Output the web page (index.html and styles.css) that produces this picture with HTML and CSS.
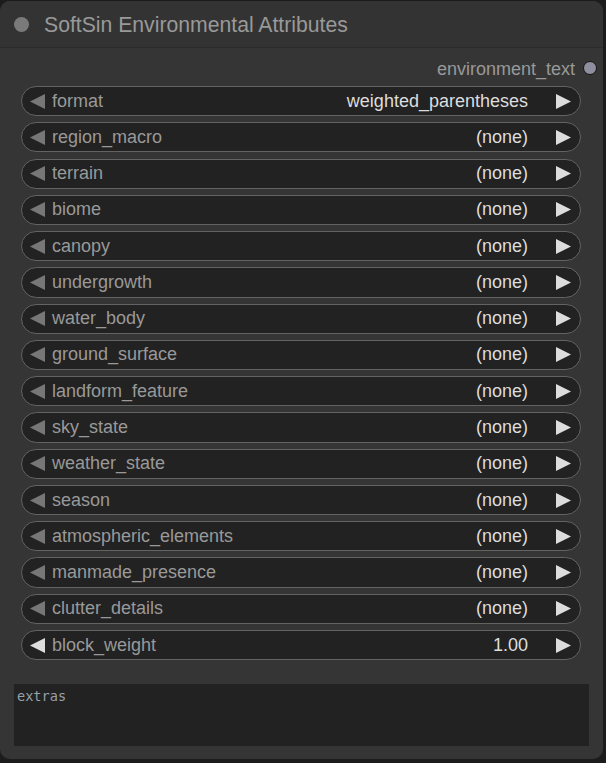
FILE: index.html
```html
<!DOCTYPE html>
<html>
<head>
<meta charset="utf-8">
<link rel="stylesheet" href="styles.css">
</head>
<body>
<div class="node">
  <div class="title">
    <span class="title-dot"></span>
    <span class="title-text">SoftSin Environmental Attributes</span>
  </div>
  <div class="body">
    <div class="output">
      <span class="output-label">environment_text</span>
      <span class="output-dot"></span>
    </div>
    <div class="widgets">
      <div class="widget"><svg class="arr dim" viewBox="0 0 15 15"><polygon points="15,0 0,7.5 15,15"/></svg><span class="label">format</span><span class="value">weighted_parentheses</span><svg class="arr" viewBox="0 0 15 15"><polygon points="0,0 15,7.5 0,15"/></svg></div>
      <div class="widget"><svg class="arr dim" viewBox="0 0 15 15"><polygon points="15,0 0,7.5 15,15"/></svg><span class="label">region_macro</span><span class="value">(none)</span><svg class="arr" viewBox="0 0 15 15"><polygon points="0,0 15,7.5 0,15"/></svg></div>
      <div class="widget"><svg class="arr dim" viewBox="0 0 15 15"><polygon points="15,0 0,7.5 15,15"/></svg><span class="label">terrain</span><span class="value">(none)</span><svg class="arr" viewBox="0 0 15 15"><polygon points="0,0 15,7.5 0,15"/></svg></div>
      <div class="widget"><svg class="arr dim" viewBox="0 0 15 15"><polygon points="15,0 0,7.5 15,15"/></svg><span class="label">biome</span><span class="value">(none)</span><svg class="arr" viewBox="0 0 15 15"><polygon points="0,0 15,7.5 0,15"/></svg></div>
      <div class="widget"><svg class="arr dim" viewBox="0 0 15 15"><polygon points="15,0 0,7.5 15,15"/></svg><span class="label">canopy</span><span class="value">(none)</span><svg class="arr" viewBox="0 0 15 15"><polygon points="0,0 15,7.5 0,15"/></svg></div>
      <div class="widget"><svg class="arr dim" viewBox="0 0 15 15"><polygon points="15,0 0,7.5 15,15"/></svg><span class="label">undergrowth</span><span class="value">(none)</span><svg class="arr" viewBox="0 0 15 15"><polygon points="0,0 15,7.5 0,15"/></svg></div>
      <div class="widget"><svg class="arr dim" viewBox="0 0 15 15"><polygon points="15,0 0,7.5 15,15"/></svg><span class="label">water_body</span><span class="value">(none)</span><svg class="arr" viewBox="0 0 15 15"><polygon points="0,0 15,7.5 0,15"/></svg></div>
      <div class="widget"><svg class="arr dim" viewBox="0 0 15 15"><polygon points="15,0 0,7.5 15,15"/></svg><span class="label">ground_surface</span><span class="value">(none)</span><svg class="arr" viewBox="0 0 15 15"><polygon points="0,0 15,7.5 0,15"/></svg></div>
      <div class="widget"><svg class="arr dim" viewBox="0 0 15 15"><polygon points="15,0 0,7.5 15,15"/></svg><span class="label">landform_feature</span><span class="value">(none)</span><svg class="arr" viewBox="0 0 15 15"><polygon points="0,0 15,7.5 0,15"/></svg></div>
      <div class="widget"><svg class="arr dim" viewBox="0 0 15 15"><polygon points="15,0 0,7.5 15,15"/></svg><span class="label">sky_state</span><span class="value">(none)</span><svg class="arr" viewBox="0 0 15 15"><polygon points="0,0 15,7.5 0,15"/></svg></div>
      <div class="widget"><svg class="arr dim" viewBox="0 0 15 15"><polygon points="15,0 0,7.5 15,15"/></svg><span class="label">weather_state</span><span class="value">(none)</span><svg class="arr" viewBox="0 0 15 15"><polygon points="0,0 15,7.5 0,15"/></svg></div>
      <div class="widget"><svg class="arr dim" viewBox="0 0 15 15"><polygon points="15,0 0,7.5 15,15"/></svg><span class="label">season</span><span class="value">(none)</span><svg class="arr" viewBox="0 0 15 15"><polygon points="0,0 15,7.5 0,15"/></svg></div>
      <div class="widget"><svg class="arr dim" viewBox="0 0 15 15"><polygon points="15,0 0,7.5 15,15"/></svg><span class="label">atmospheric_elements</span><span class="value">(none)</span><svg class="arr" viewBox="0 0 15 15"><polygon points="0,0 15,7.5 0,15"/></svg></div>
      <div class="widget"><svg class="arr dim" viewBox="0 0 15 15"><polygon points="15,0 0,7.5 15,15"/></svg><span class="label">manmade_presence</span><span class="value">(none)</span><svg class="arr" viewBox="0 0 15 15"><polygon points="0,0 15,7.5 0,15"/></svg></div>
      <div class="widget"><svg class="arr dim" viewBox="0 0 15 15"><polygon points="15,0 0,7.5 15,15"/></svg><span class="label">clutter_details</span><span class="value">(none)</span><svg class="arr" viewBox="0 0 15 15"><polygon points="0,0 15,7.5 0,15"/></svg></div>
      <div class="widget"><svg class="arr" viewBox="0 0 15 15"><polygon points="15,0 0,7.5 15,15"/></svg><span class="label">block_weight</span><span class="value">1.00</span><svg class="arr" viewBox="0 0 15 15"><polygon points="0,0 15,7.5 0,15"/></svg></div>
    </div>
    <div class="extras"><span class="placeholder">extras</span></div>
  </div>
</div>
</body>
</html>
```

FILE: styles.css
```css
html, body {
  margin: 0;
  padding: 0;
  background: #1c1c1c;
}
body {
  width: 606px;
  height: 763px;
  overflow: hidden;
  font-family: "Liberation Sans", Arial, sans-serif;
}
.node {
  margin-top: 1px;
  width: 603px;
  height: 758px;
  background: #353535;
  border-radius: 10px;
  overflow: hidden;
  display: flex;
  flex-direction: column;
}
.title {
  height: 46px;
  flex: none;
  background: #333333;
  border-bottom: 1px solid #2b2b2b;
  display: flex;
  align-items: center;
  padding-left: 14px;
}
.title-dot {
  width: 15px;
  height: 15px;
  border-radius: 50%;
  background: #7a7a7a;
  margin-top: 1px;
}
.title-text {
  margin-left: 15px;
  font-size: 21.2px;
  color: #999999;
  margin-top: 1px;
}
.body {
  display: flex;
  flex-direction: column;
  padding-top: 4px;
}
.output {
  height: 34px;
  display: flex;
  align-items: center;
  justify-content: flex-end;
  padding-right: 6px;
}
.output-label {
  font-size: 18px;
  color: #999999;
  margin-right: 8px;
}
.output-dot {
  width: 12px;
  height: 12px;
  border-radius: 50%;
  background: #8e8e9e;
  border: 1px solid #161616;
  margin-top: -2px;
}
.widgets {
  display: flex;
  flex-direction: column;
  gap: 6.05px;
  padding: 0 22px 0 21px;
}
.widget {
  box-sizing: border-box;
  height: 30.22px;
  border: 1px solid #636363;
  border-radius: 16px;
  background: #222222;
  display: flex;
  align-items: center;
  padding: 0 9px 0 8px;
  font-size: 18px;
}
.arr {
  width: 15px;
  height: 15px;
  flex: none;
  fill: #dddddd;
}
.arr.dim {
  fill: #777777;
}
.label {
  margin-left: 7px;
  color: #999999;
  flex: 1;
}
.value {
  color: #dddddd;
  margin-right: 28px;
}
.extras {
  margin: 23.5px 14px 0 14px;
  height: 62.5px;
  background: #222222;
  padding: 3px 3px;
  box-sizing: border-box;
}
.placeholder {
  font-family: "DejaVu Sans Mono", monospace;
  font-size: 13.6px;
  color: #98a0a8;
}
```
